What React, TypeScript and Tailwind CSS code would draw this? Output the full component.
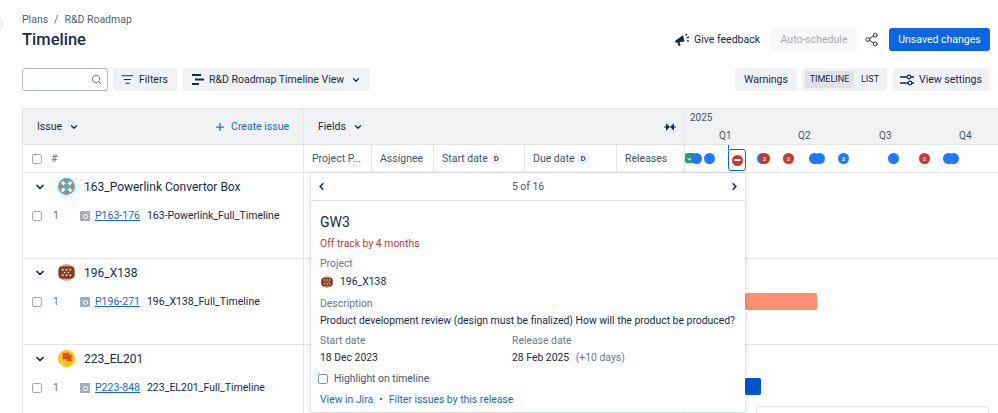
import { ChevronDown, ChevronLeft, ChevronRight, Check, ListFilter, Plus, Search, Share2 } from 'lucide-react';

const headerBtn = 'flex h-[23px] shrink-0 items-center whitespace-nowrap rounded-[3px] bg-[#f1f2f4] font-[450] text-[#172b4d]';

function Avatar({ kind, size }: { kind: string; size: number }) {
  if (kind === 'ring') {
    return (
      <svg width={size} height={size} viewBox="0 0 18 18" className="shrink-0">
        <circle cx="9" cy="9" r="9" fill="#1fc4dc" />
        <circle cx="9" cy="9" r="7" fill="#f4685c" />
        <path d="M4 4l10 10M14 4L4 14" stroke="#fff" strokeWidth="3" />
        <circle cx="9" cy="9" r="3.2" fill="#1fc4dc" />
      </svg>
    );
  }
  if (kind === 'cookie') {
    return (
      <svg width={size} height={size} viewBox="0 0 18 18" className="shrink-0">
        <circle cx="9" cy="9" r="9" fill="#f3a27c" />
        <rect x="0.5" y="2.5" width="17" height="13" rx="4" fill="#7d3f22" />
        {[5, 9, 13].map((x) => (
          <g key={x}>
            <circle cx={x} cy="6" r="1.1" fill="#f0d9c8" />
            <circle cx={x} cy="12" r="1.1" fill="#f0d9c8" />
          </g>
        ))}
        <circle cx="7" cy="9" r="0.9" fill="#f0d9c8" />
        <circle cx="11" cy="9" r="0.9" fill="#f0d9c8" />
      </svg>
    );
  }
  return (
    <svg width={size} height={size} viewBox="0 0 18 18" className="shrink-0">
      <circle cx="9" cy="9" r="9" fill="#ffc400" />
      <path d="M3.5 2.5h1.3v13H3.5z" fill="#ffe9a8" />
      <path d="M4.8 3h7v2h3.4l-1.4 3.4 1.4 3.4H9.8v-2h-5z" fill="#e5492f" />
    </svg>
  );
}

function Box() {
  return <span className="block h-[10px] w-[10px] shrink-0 rounded-[2px] border border-[#a5adba] bg-white" />;
}

function StoryIcon() {
  return (
    <span className="flex h-[10px] w-[10px] shrink-0 items-center justify-center rounded-[1px] bg-[#a5adba]">
      <span className="h-[5px] w-[5px] rounded-full border border-white" />
    </span>
  );
}

function Group({ kind, name, issueKey, title }: { kind: string; name: string; issueKey: string; title: string }) {
  return (
    <div className="h-[86px] border-b border-[#e4e6ea]">
      <div className="flex h-[27px] items-center">
        <ChevronDown size={12} strokeWidth={3.5} className="ml-[11px] text-[#172b4d]" />
        <span className="ml-[12px]"><Avatar kind={kind} size={17} /></span>
        <span className="ml-[9px] text-[12px] text-[#172b4d]">{name}</span>
      </div>
      <div className="mt-[4px] flex h-[24px] items-center">
        <span className="ml-[9px]"><Box /></span>
        <span className="ml-[11px] w-[27px] text-[10.5px] text-[#626f86]">1</span>
        <StoryIcon />
        <span className="ml-[5px] text-[10.5px] text-[#1868db] underline">{issueKey}</span>
        <span className="ml-[7px] text-[10.5px] font-[450] text-[#172b4d]">{title}</span>
      </div>
    </div>
  );
}

function Dot({ tone, label, className = '' }: { tone: string; label?: string; className?: string }) {
  return (
    <span className={`flex h-[11px] w-[11px] shrink-0 items-center justify-center rounded-full text-[6px] font-bold text-white ${tone} ${className}`}>
      {label}
    </span>
  );
}

function FieldCell({ width, label, badge }: { width: string; label: string; badge?: boolean }) {
  return (
    <div className={`flex h-full shrink-0 items-center whitespace-nowrap border-r border-[#e4e6ea] pl-[8px] text-[10.5px] text-[#44546f] ${width}`}>
      <span>{label}</span>
      {badge && (
        <span className="ml-[3px] flex h-[11px] w-[11px] items-center justify-center rounded-[2px] bg-[#f1f2f4] text-[8px] font-bold text-[#44546f]">D</span>
      )}
    </div>
  );
}

function ReleasePopup() {
  return (
    <div className="absolute left-[311px] top-[173px] h-[239px] w-[434px] rounded-[3px] bg-white text-[10.4px] leading-[14px] shadow-[0_1px_5px_rgba(9,30,66,0.25)]">
      <div className="relative flex h-[28px] items-center justify-center border-b border-[#dfe1e6] text-[#44546f]">
        <ChevronLeft size={11} strokeWidth={3.5} className="absolute left-[5px] text-[#172b4d]" />
        5 of 16
        <ChevronRight size={11} strokeWidth={3.5} className="absolute right-[5px] text-[#172b4d]" />
      </div>
      <div className="px-[9px]">
        <div className="mt-[11px] text-[14px] leading-[20px] text-[#172b4d]">GW3</div>
        <div className="mt-[5px] text-[#c9372c]">Off track by 4 months</div>
        <div className="mt-[6px] text-[#6b778c]">Project</div>
        <div className="mt-[4px] flex h-[14px] items-center gap-[7px] pl-[1px] text-[#172b4d]">
          <Avatar kind="cookie" size={12} />
          196_X138
        </div>
        <div className="mt-[8px] text-[#6b778c]">Description</div>
        <div className="mt-[3px] whitespace-nowrap text-[#172b4d]">Product development review (design must be finalized) How will the product be produced?</div>
        <div className="mt-[6px] flex">
          <div className="w-[192px]">
            <div className="text-[#6b778c]">Start date</div>
            <div className="mt-[3px] text-[#172b4d]">18 Dec 2023</div>
          </div>
          <div>
            <div className="text-[#6b778c]">Release date</div>
            <div className="mt-[3px] text-[#172b4d]">
              28 Feb 2025 <span className="ml-[4px] text-[#6b778c]">(+10 days)</span>
            </div>
          </div>
        </div>
        <div className="mt-[7px] flex h-[14px] items-center text-[#44546f]">
          <span className="-ml-[2px] block h-[10px] w-[10px] rounded-[2px] border border-[#8590a2]" />
          <span className="ml-[6px]">Highlight on timeline</span>
        </div>
        <div className="mt-[7px] flex items-center font-[450] text-[#1868db]">
          View in Jira
          <span className="mx-[6px] text-[#44546f]">•</span>
          Filter issues by this release
        </div>
      </div>
    </div>
  );
}

export default function App() {
  return (
    <div className="relative h-[413px] w-[998px] overflow-hidden bg-white font-['Roboto',sans-serif] text-[#172b4d] antialiased">
      <span className="absolute -left-[8px] top-[16px] h-[16px] w-[10px] rounded-full border border-[#dfe1e6] bg-white" />

      <div className="pl-[22px] pr-[8px]">
        <div className="flex items-start justify-between">
          <div>
            <div className="mt-[14px] flex h-[12px] items-center text-[10.5px] text-[#505f79]">
              Plans <span className="mx-[6px]">/</span> R&D Roadmap
            </div>
            <h1 className="mt-[3px] text-[16.5px] font-medium leading-[22px] text-[#172b4d]">Timeline</h1>
          </div>
          <div className="mt-[28px] flex items-center">
            <svg width="16" height="14" viewBox="0 0 16 14">
              <path d="M1 8l8-6 1.6 6.6-5 .6 1 3.4-2 .4-1.2-3.6-1.7.3z" fill="#172b4d" />
              <path d="M11.5 2.5l1.3-1.7M12.5 5l2.4-.8M12.8 7.6l2 .4" stroke="#172b4d" strokeWidth="1.3" />
            </svg>
            <span className="ml-[4px] whitespace-nowrap text-[10.5px] font-[450] text-[#172b4d]">Give feedback</span>
            <span className={`${headerBtn} ml-[11px] w-[86px] justify-center !bg-[#f7f8f9] text-[10.5px] !text-[#a5adba]`}>Auto-schedule</span>
            <Share2 size={15} strokeWidth={1.5} className="ml-[7px] text-[#172b4d]" />
            <span className="ml-[10px] flex h-[23px] w-[101px] items-center justify-center whitespace-nowrap rounded-[3px] bg-[#0c66e4] text-[10.5px] font-[450] text-white">Unsaved changes</span>
          </div>
        </div>

        <div className="mt-[17px] flex h-[23px] items-center">
          <div className="flex h-[23px] w-[86px] items-center justify-end rounded-[3px] border border-[#b3b9c4] pr-[5px]">
            <Search size={11} className="text-[#6b778c]" />
          </div>
          <div className={`${headerBtn} ml-[5px] w-[64px] pl-[8px] text-[10.5px]`}>
            <ListFilter size={13} className="mr-[5px]" />
            Filters
          </div>
          <div className={`${headerBtn} ml-[6px] w-[187px] pl-[9px] text-[10.5px]`}>
            <svg width="12" height="11" viewBox="0 0 12 11" className="mr-[5px]">
              <path d="M0 0h9v2H0zM3 4.5h9v2H3zM0 9h7v2H0z" fill="#172b4d" />
            </svg>
            R&D Roadmap Timeline View
            <ChevronDown size={10} strokeWidth={3} className="ml-[7px]" />
          </div>
          <div className={`${headerBtn} ml-auto w-[62px] justify-center text-[10.5px]`}>Warnings</div>
          <div className={`${headerBtn} ml-[5px] w-[85px] px-[3px] text-[9px]`}>
            <span className="flex h-[17px] w-[49px] items-center justify-center rounded-[2px] bg-[#dfe1e6]">TIMELINE</span>
            <span className="ml-[7px]">LIST</span>
          </div>
          <div className={`${headerBtn} ml-[6px] w-[97px] pl-[7px] text-[10.5px]`}>
            <svg width="14" height="12" viewBox="0 0 14 12" className="mr-[5px]" fill="none" stroke="#172b4d" strokeWidth="1.3">
              <path d="M0 3h7M11 3h3M0 9h8M12 9h2" />
              <circle cx="9" cy="3" r="1.8" />
              <circle cx="10" cy="9" r="1.8" />
            </svg>
            View settings
          </div>
        </div>

        <div className="mt-[17px] flex h-[305px] w-[976px] border-l border-t border-[#e4e6ea]">
          <div className="w-[281px] shrink-0 border-r border-[#e4e6ea]">
            <div className="flex h-[36px] items-center border-b border-[#e4e6ea] bg-[#f1f2f4] pl-[14px] pr-[14px] text-[10.5px] font-[450]">
              Issue
              <ChevronDown size={10} strokeWidth={3} className="ml-[7px]" />
              <span className="ml-auto flex items-center text-[#1868db]">
                <Plus size={12} strokeWidth={2.5} className="mr-[5px]" />
                Create issue
              </span>
            </div>
            <div className="flex h-[28px] items-center border-b border-[#e4e6ea] pl-[9px] text-[10.5px] text-[#6b778c]">
              <Box />
              <span className="ml-[9px]">#</span>
            </div>
            <Group kind="ring" name="163_Powerlink Convertor Box" issueKey="P163-176" title="163-Powerlink_Full_Timeline" />
            <Group kind="cookie" name="196_X138" issueKey="P196-271" title="196_X138_Full_Timeline" />
            <Group kind="flag" name="223_EL201" issueKey="P223-848" title="223_EL201_Full_Timeline" />
          </div>

          <div className="w-[381px] shrink-0 border-r border-[#e4e6ea]">
            <div className="flex h-[36px] items-center border-b border-[#e4e6ea] bg-[#f1f2f4] pl-[14px] pr-[8px] text-[10.5px] font-[450]">
              Fields
              <ChevronDown size={10} strokeWidth={3} className="ml-[7px]" />
              <svg width="12" height="8" viewBox="0 0 14 8" className="ml-auto">
                <path d="M0 4h4M6 4L3 1.2v5.6zM14 4h-4M8 4l3-2.8v5.6z" stroke="#172b4d" strokeWidth="1.3" fill="#172b4d" />
              </svg>
            </div>
            <div className="flex h-[28px] border-b border-[#e4e6ea]">
              <FieldCell width="w-[68px]" label="Project P..." />
              <FieldCell width="w-[62px]" label="Assignee" />
              <FieldCell width="w-[91px]" label="Start date" badge />
              <FieldCell width="w-[92px]" label="Due date" badge />
              <div className="flex flex-1 items-center pl-[8px] text-[10.5px] text-[#44546f]">Releases</div>
            </div>
            <div className="h-[86px] border-b border-[#e4e6ea]" />
            <div className="h-[86px] border-b border-[#e4e6ea]" />
          </div>

          <div className="min-w-0 flex-1">
            <div className="relative h-[36px] border-b border-[#e4e6ea] bg-[#f1f2f4] text-[10px] text-[#44546f]">
              <span className="absolute left-[5px] top-[1px] font-[450]">2025</span>
              <span className="absolute left-[34px] top-[19px]">Q1</span>
              <span className="absolute left-[113px] top-[19px]">Q2</span>
              <span className="absolute left-[194px] top-[19px]">Q3</span>
              <span className="absolute left-[274px] top-[19px]">Q4</span>
            </div>
            <div className="relative h-[28px] border-b border-[#e4e6ea]">
              <span className="absolute left-[43px] top-0 h-[5px] w-[1px] bg-[#0c66e4]" />
              <span className="absolute left-0 top-[8px] flex h-[10px] w-[10px] items-center justify-center rounded-[2px] bg-[#22a06b]">
                <Check size={7} strokeWidth={4} className="text-white" />
              </span>
              <Dot tone="bg-[#1d7afc]" className="absolute left-[6px] top-[8px]" />
              <Dot tone="bg-[#1d7afc]" className="absolute left-[19px] top-[8px]" />
              <span className="absolute left-[43px] top-[4px] flex h-[22px] w-[18px] items-center justify-center rounded-[3px] border-[1.5px] border-[#0c66e4]">
                <span className="flex h-[11px] w-[11px] items-center justify-center rounded-full bg-[#c9372c]">
                  <span className="h-[2px] w-[7px] rounded-[1px] bg-white" />
                </span>
              </span>
              <Dot tone="bg-[#1d7afc]" className="absolute left-[72px] top-[8px]" />
              <Dot tone="bg-[#c9372c]" label="2" className="absolute left-[74px] top-[8px]" />
              <Dot tone="bg-[#c9372c]" label="2" className="absolute left-[98px] top-[8px]" />
              <Dot tone="bg-[#1d7afc]" className="absolute left-[124px] top-[8px]" />
              <Dot tone="bg-[#1d7afc]" className="absolute left-[129px] top-[8px]" />
              <Dot tone="bg-[#1d7afc]" label="2" className="absolute left-[153px] top-[8px]" />
              <Dot tone="bg-[#1d7afc]" className="absolute left-[203px] top-[8px]" />
              <Dot tone="bg-[#c9372c]" label="2" className="absolute left-[234px] top-[8px]" />
              <Dot tone="bg-[#1d7afc]" className="absolute left-[258px] top-[8px]" />
              <Dot tone="bg-[#1d7afc]" className="absolute left-[263px] top-[8px]" />
            </div>
            <div className="h-[86px] border-b border-[#e4e6ea]" />
            <div className="relative h-[86px] border-b border-[#e4e6ea]">
              <span className="absolute left-[60px] top-[34px] h-[17px] w-[72px] rounded-[2px] bg-[#ff8f73]" />
            </div>
            <div className="relative h-[68px]">
              <span className="absolute left-[60px] top-[33px] h-[17px] w-[16px] rounded-[2px] bg-[#0055cc]" />
            </div>
          </div>
        </div>
      </div>

      <ReleasePopup />
      <div className="absolute left-[756px] top-[406px] h-[20px] w-[233px] rounded-[3px] border border-[#e4e6ea] bg-white" />
    </div>
  );
}
